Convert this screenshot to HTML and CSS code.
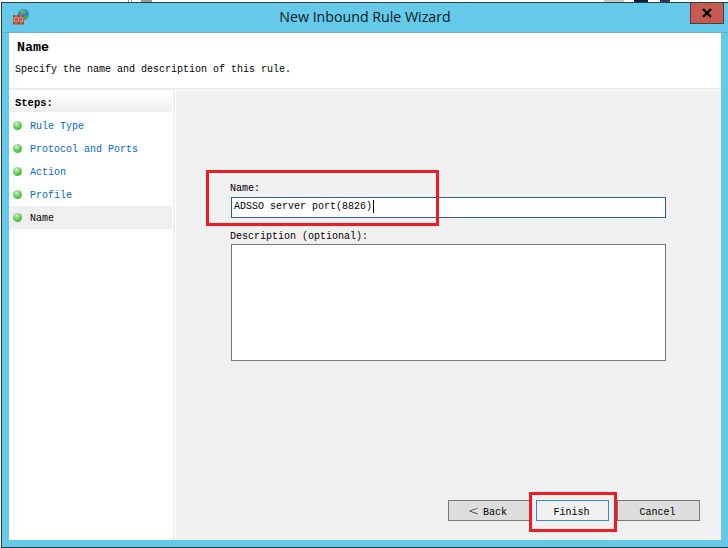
FILE: index.html
```html
<!DOCTYPE html>
<html lang="en">
<head>
<meta charset="utf-8">
<title>New Inbound Rule Wizard</title>
<link rel="stylesheet" href="styles.css">
</head>
<body>
<div class="backdrop">
  <span class="scrap scrap-a"></span>
  <span class="scrap scrap-b"></span>
  <span class="scrap scrap-c"></span>
  <span class="scrap scrap-d"></span>
  <span class="scrap scrap-e"></span>
</div>
<div class="window">
  <div class="titlebar">
    <svg class="app-icon" width="18" height="18" viewBox="0 0 18 18">
      <circle cx="11.5" cy="6.5" r="5.5" fill="#2f86d8"/>
      <path d="M8 3c2-2 4-1.500 5 0s0 3-2 3-3-1-3-3z" fill="#5fc23c"/>
      <path d="M13 8c2-1 3.500-1 3.500 0s-1.500 3-3 3-1-2-.5-3z" fill="#48b030"/>
      <rect x="1" y="7" width="11" height="9.500" fill="#a5493a"/>
      <path d="M1 10h11M1 13h11M4 7v3M9 7v3M2.500 10v3M6.500 10v3M10.500 10v3M4 13v3.500M9 13v3.500" stroke="#d99a84" stroke-width="1" fill="none"/>
    </svg>
    <div class="title">New Inbound Rule Wizard</div>
    <div class="close">
      <svg width="12" height="10" viewBox="0 0 12 10"><path d="M2 1l8 8M10 1l-8 8" stroke="#000" stroke-width="2.400" fill="none"/></svg>
    </div>
  </div>
  <div class="content">
    <header class="head">
      <h1 class="head-title">Name</h1>
      <p class="head-sub">Specify the name and description of this rule.</p>
    </header>
    <div class="panels">
      <aside class="sidebar">
        <div class="steps-head">Steps:</div>
        <ul class="steps">
          <li class="step"><span class="dot"></span><span class="step-text">Rule Type</span></li>
          <li class="step"><span class="dot"></span><span class="step-text">Protocol and Ports</span></li>
          <li class="step"><span class="dot"></span><span class="step-text">Action</span></li>
          <li class="step"><span class="dot"></span><span class="step-text">Profile</span></li>
          <li class="step step-current"><span class="dot"></span><span class="step-text">Name</span></li>
        </ul>
      </aside>
      <main class="main">
        <div class="form">
          <label class="label">Name:</label>
          <div class="input">ADSSO server port(8826)<span class="caret"></span></div>
          <label class="label label-desc">Description (optional):</label>
          <div class="textarea"></div>
        </div>
        <div class="buttons">
          <div class="btn btn-back"><span class="chev">&lt;</span> Back</div>
          <div class="btn btn-finish">Finish</div>
          <div class="btn btn-cancel">Cancel</div>
        </div>
        <div class="mark mark-name"></div>
        <div class="mark mark-finish"></div>
      </main>
    </div>
  </div>
</div>
</body>
</html>
```

FILE: styles.css
```css
* { box-sizing: border-box; }
html, body { margin: 0; padding: 0; width: 728px; height: 548px; overflow: hidden; background: #fff; }
body { position: relative; font-family: "Liberation Mono", "DejaVu Sans Mono", monospace; font-size: 10px; color: #000; }

.backdrop { position: absolute; top: 0; left: 0; width: 728px; height: 2px; }
.scrap { position: absolute; top: 0; height: 2px; }
.scrap-a { left: 128px; width: 4px; border-left: 1px solid #999; border-right: 1px solid #999; }
.scrap-b { left: 141px; width: 11px; background: #8fa08f; }
.scrap-c { left: 604px; width: 20px; background: #c8c8c8; }
.scrap-d { left: 634px; width: 14px; background: #123; }
.scrap-e { left: 660px; width: 10px; background: #335; }

.window { position: relative; margin: 2px 0 0 1px; width: 727px; height: 546px; display: flex; flex-direction: column; background: #65c9ea; border-top: 1px solid #2e3b40; border-left: 1px solid #2e3b40; border-bottom: 1px solid #26343a; }

.titlebar { height: 30px; flex: none; display: grid; grid-template-columns: 1fr auto 1fr; align-items: start; border-bottom: 1px solid #7ba9bd; }
.app-icon { margin: 5px 0 0 10px; }
.title { font-family: "Open Sans", "Noto Sans", sans-serif; font-size: 14.2px; line-height: 20px; margin-top: 4px; color: #0a1a22; }
.close { justify-self: end; margin-right: 4px; width: 34px; height: 21px; display: flex; align-items: center; justify-content: center; background: #c45a50; border: 1px solid #5a3a3c; border-top: 0; }

.content { flex: 1; margin: 0 7px 7px 7px; display: flex; flex-direction: column; background: #fff; min-height: 0; }

.head { height: 57px; flex: none; border-bottom: 2px solid #ececec; padding: 8px 0 0 6px; }
.head-title { margin: 0 0 0 2px; font-size: 13.300px; line-height: 14px; font-weight: 700; }
.head-sub { margin: 9px 0 0; line-height: 12px; }

.panels { flex: 1; margin-top: 1px; display: flex; min-height: 0; }

.sidebar { flex: none; width: 166px; padding-right: 1px; margin-right: 1px; border-right: 2px solid #eeeeee; }
.steps-head { height: 21px; padding: 6px 0 0 6px; line-height: 12px; font-size: 10.5px; font-weight: 700; background: linear-gradient(#ffffff, #eeeeee); }
.steps { list-style: none; margin: 2px 0 0; padding: 0; }
.step { height: 23px; display: flex; align-items: center; padding-left: 4px; color: #0066cc; }
.step-text { padding-top: 1px; }
.step-current { background: #efefef; color: #000; }
.dot { width: 9px; height: 9px; border-radius: 50%; margin-right: 8px; background: radial-gradient(circle at 40% 30%, #d8efd0 0, #8fd680 30%, #3fc232 70%, #35a92c 100%); }

.main { position: relative; flex: 1; background: #f0f0f0; display: flex; flex-direction: column; padding: 0 0 19px; }
.form { padding: 92px 55px 0; display: flex; flex-direction: column; }
.label { display: block; line-height: 12px; margin: 0 0 2px -1px; }
.input { height: 21px; padding: 0 0 2px 2px; border: 1px solid #2b6189; background: #fff; line-height: 12px; display: flex; align-items: center; }
.caret { width: 1px; height: 13px; background: #000; margin-left: 1px; }
.label-desc { margin: 13px 0 1px -1px; }
.textarea { height: 117px; border: 1px solid #777; background: #fff; }

.buttons { margin-top: auto; display: flex; justify-content: flex-end; padding-right: 21px; }
.btn { height: 21px; padding: 4px 2px 0 0; display: flex; align-items: center; justify-content: center; border: 1px solid #777; background: #dddddd; }
.btn-back { width: 82px; margin-right: 6px; padding-right: 3px; }
.chev { font-family: "DejaVu Sans", sans-serif; font-size: 13px; line-height: 12px; margin: -3px 4px 0 0; font-weight: 200; }
.btn-finish { width: 73px; margin-right: 8px; background: #f0f0f0; border-color: #3c86bd; }
.btn-cancel { width: 83px; }

.mark { position: absolute; border: 3px solid #ed1c24; }
.mark-name { left: 30px; top: 79px; width: 233px; height: 56px; }
.mark-finish { left: 353px; top: 401px; width: 88px; height: 40px; }
```
